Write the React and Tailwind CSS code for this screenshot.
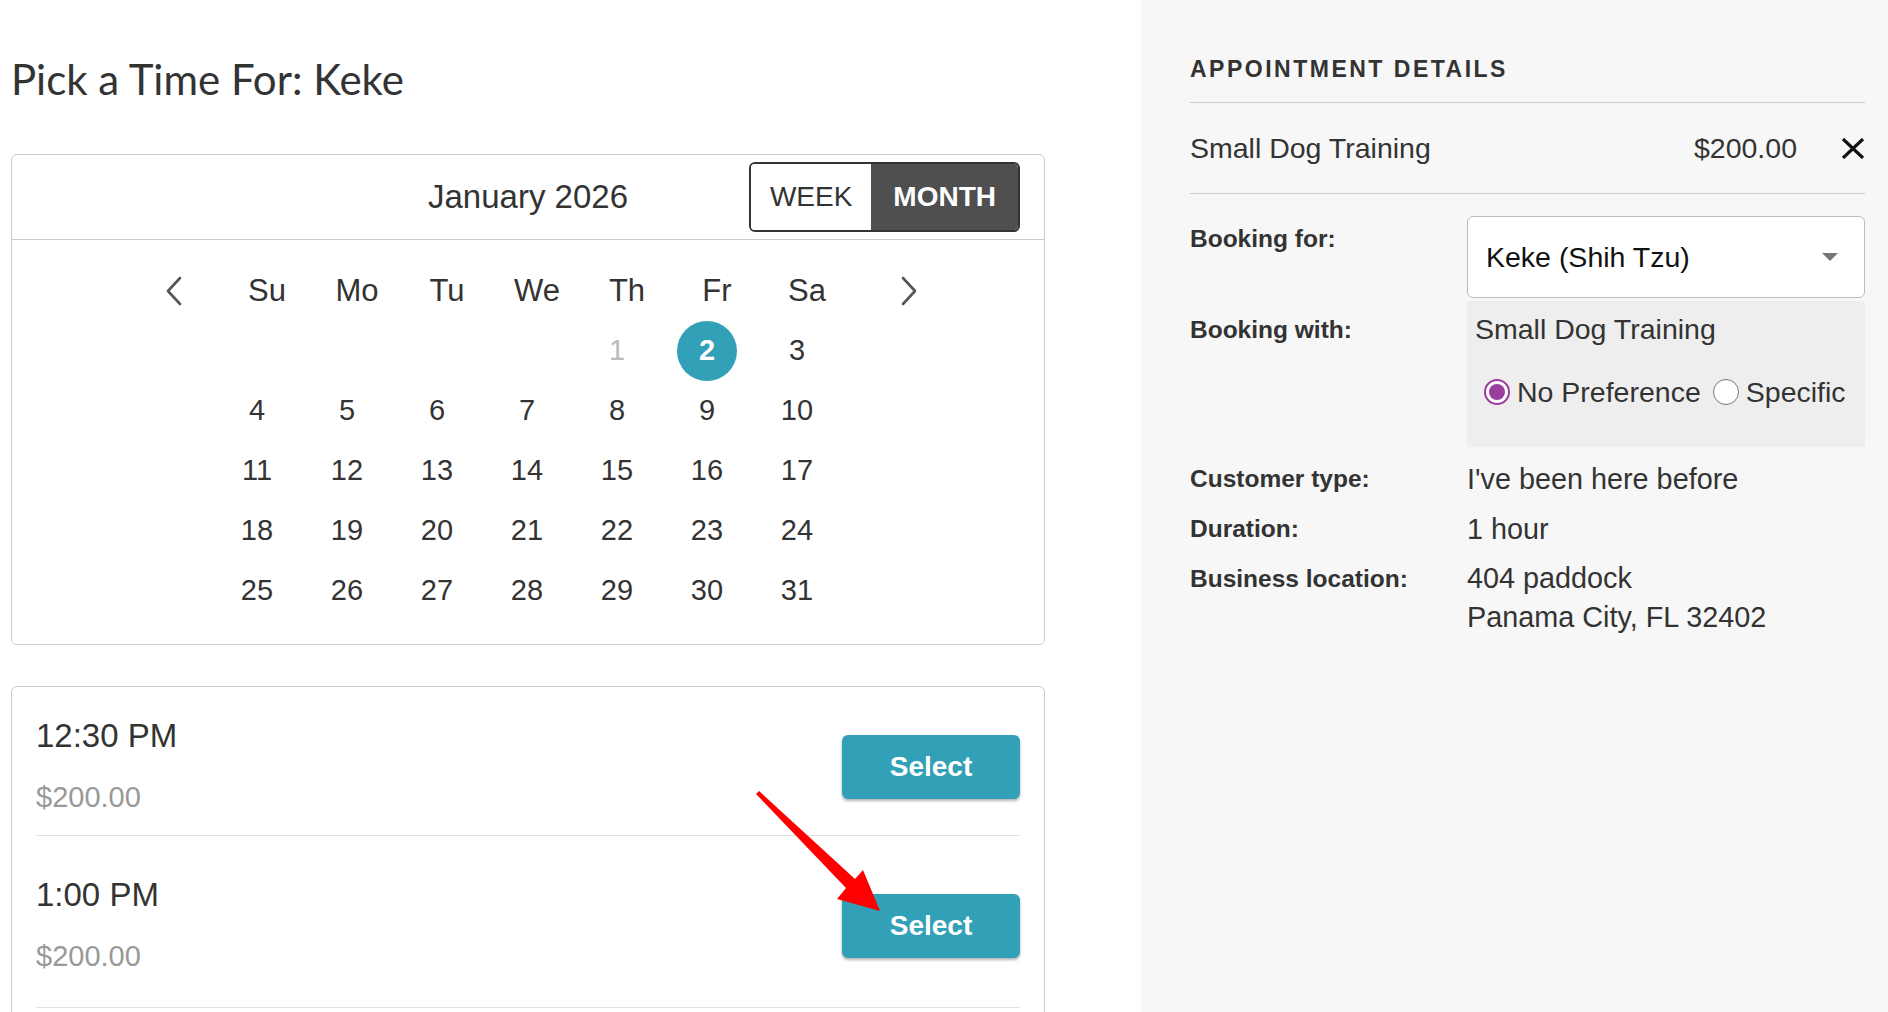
import React from "react";

const SANS = "font-['Liberation_Sans','Helvetica_Neue',Arial,sans-serif]";

function Chevron({ dir }) {
  return (
    <svg width="18" height="30" viewBox="0 0 18 30" fill="none">
      {dir === "left" ? (
        <polyline points="15,2 3,15 15,28" stroke="#555" strokeWidth="2.6" strokeLinecap="round" strokeLinejoin="round" />
      ) : (
        <polyline points="3,2 15,15 3,28" stroke="#555" strokeWidth="2.6" strokeLinecap="round" strokeLinejoin="round" />
      )}
    </svg>
  );
}

function Calendar() {
  const headers = ["Su", "Mo", "Tu", "We", "Th", "Fr", "Sa"];
  const cells = [null, null, null, null];
  for (let d = 1; d <= 31; d++) cells.push(d);
  return (
    <div className="w-[1034px] border-[1.5px] border-[#cccccc] rounded-[6px] bg-white">
      <div className="h-[85px] grid grid-cols-[1fr_auto_1fr] items-center border-b-[1.5px] border-[#cccccc]">
        <div />
        <div className="text-[33px] text-[#333] leading-[40px]">January 2026</div>
        <div className="justify-self-end mr-[24px] flex h-[70px] border-2 border-[#333] rounded-[6px] overflow-hidden">
          <div className="flex items-center px-[19px] text-[28px] text-[#333] bg-white">WEEK</div>
          <div className="flex items-center px-[22px] text-[28px] font-bold text-white bg-[#4f4f4f]">MONTH</div>
        </div>
      </div>
      <div className="flex ml-[124px] pt-[21px] pb-[23px]">
        <div className="w-[76px] h-[60px] flex items-center justify-center">
          <Chevron dir="left" />
        </div>
        <div className="grid grid-cols-[repeat(7,90px)] auto-rows-[60px]">
          {headers.map((h) => (
            <div key={h} className="flex items-center justify-center text-[31px] text-[#333] translate-x-[10px]">
              {h}
            </div>
          ))}
          {cells.map((d, i) => (
            <div key={i} className="flex items-center justify-center">
              {d === null ? null : d === 2 ? (
                <div className="w-[60px] h-[60px] rounded-full bg-[#32a0b6] flex items-center justify-center text-[29px] font-bold text-white">
                  2
                </div>
              ) : (
                <span className={"text-[29px] " + (d === 1 ? "text-[#bbbbbb]" : "text-[#333]")}>{d}</span>
              )}
            </div>
          ))}
        </div>
        <div className="w-[134px] h-[60px] flex items-center justify-center">
          <Chevron dir="right" />
        </div>
      </div>
    </div>
  );
}

function Slot({ time, price, className }) {
  return (
    <div className={"flex items-center justify-between border-b-[1.5px] border-[#e2e2e2] " + className}>
      <div>
        <div className="text-[33px] leading-[40px] text-[#333]">{time}</div>
        <div className="mt-[21px] text-[29px] leading-[40px] text-[#999]">{price}</div>
      </div>
      <button className="w-[178px] h-[64px] rounded-[6px] bg-[#32a0b6] text-white text-[28px] font-bold shadow-[0_2px_3px_rgba(0,0,0,0.3)]">
        Select
      </button>
    </div>
  );
}

function Radio({ checked }) {
  return checked ? (
    <span className="w-[26px] h-[26px] rounded-full border-2 border-[#9b3e9b] bg-white flex items-center justify-center shrink-0">
      <span className="block w-[16px] h-[16px] rounded-full bg-[#9b3e9b]" />
    </span>
  ) : (
    <span className="block w-[26px] h-[26px] rounded-full border-[1.5px] border-[#777] bg-white shrink-0" />
  );
}

export default function App() {
  return (
    <div className={"relative w-[1888px] h-[1012px] overflow-hidden flex " + SANS}>
      <div className="w-[1141px] bg-white pl-[11px] shrink-0">
        <h1 className="pt-[55px] text-[42px] leading-[48px] text-[#333] font-['Lato','Open_Sans',sans-serif]">
          Pick a Time For: Keke
        </h1>
        <div className="mt-[51px]">
          <Calendar />
        </div>
        <div className="mt-[41px] w-[1034px] border-[1.5px] border-[#cccccc] rounded-[6px] bg-white px-[24px] h-[400px]">
          <Slot time="12:30 PM" price="$200.00" className="pt-[29px] pb-[18px]" />
          <Slot time="1:00 PM" price="$200.00" className="pt-[39px] pb-[31px]" />
        </div>
      </div>

      <div className="flex-1 bg-[#f7f7f7] pl-[49px] pr-[23px] text-[#333]">
        <div className="pt-[54px] pb-[18px] border-b-[1.5px] border-[#cccccc] text-[23px] leading-[30px] font-bold tracking-[2.5px]">
          APPOINTMENT DETAILS
        </div>
        <div className="pt-[25px] pb-[25px] border-b-[1.5px] border-[#cccccc] flex items-center text-[28.5px] leading-[40px]">
          <span className="flex-1">Small Dog Training</span>
          <span>$200.00</span>
          <svg className="ml-[44px]" width="24" height="21" viewBox="0 0 24 21">
            <line x1="2" y1="1" x2="22" y2="20" stroke="#111" strokeWidth="3.2" />
            <line x1="22" y1="1" x2="2" y2="20" stroke="#111" strokeWidth="3.2" />
          </svg>
        </div>

        <div className="mt-[22px] grid grid-cols-[277px_1fr]">
          <div className="pt-[8px] text-[24.5px] leading-[30px] font-bold">Booking for:</div>
          <div className="h-[82px] bg-white border-[1.5px] border-[#bdbdbd] rounded-[6px] flex items-center pl-[18px] pr-[26px]">
            <span className="flex-1 text-[28.5px] text-[#111]">Keke (Shih Tzu)</span>
            <svg width="16" height="8" viewBox="0 0 16 8">
              <polygon points="0,0 16,0 8,8" fill="#777" />
            </svg>
          </div>

          <div className="mt-[3px] pt-[14px] text-[24.5px] leading-[30px] font-bold">Booking with:</div>
          <div className="mt-[3px] h-[146px] bg-[#eeeeee] pl-[8px] pt-[8px]">
            <div className="text-[28.5px] leading-[40px]">Small Dog Training</div>
            <div className="mt-[23px] ml-[9px] flex items-center text-[28.5px] leading-[40px]">
              <Radio checked />
              <span className="ml-[7px]">No Preference</span>
              <span className="ml-[12px]">
                <Radio />
              </span>
              <span className="ml-[7px]">Specific</span>
            </div>
          </div>

          <div className="mt-[12px] text-[24.5px] leading-[40px] font-bold">Customer type:</div>
          <div className="mt-[12px] text-[28.8px] leading-[40px]">I've been here before</div>

          <div className="mt-[10px] text-[24.5px] leading-[40px] font-bold">Duration:</div>
          <div className="mt-[10px] text-[28.8px] leading-[40px]">1 hour</div>

          <div className="mt-[10px] text-[24.5px] leading-[39px] font-bold">Business location:</div>
          <div className="mt-[10px] text-[28.8px] leading-[39px]">
            <div>404 paddock</div>
            <div>Panama City, FL 32402</div>
          </div>
        </div>
      </div>

      <svg className="absolute left-0 top-0 pointer-events-none" width="1888" height="1012">
        <polygon
          points="756,794 759,791 855,879 863,870 880,911 837,899 846,888"
          fill="#ff0000"
        />
      </svg>
    </div>
  );
}
